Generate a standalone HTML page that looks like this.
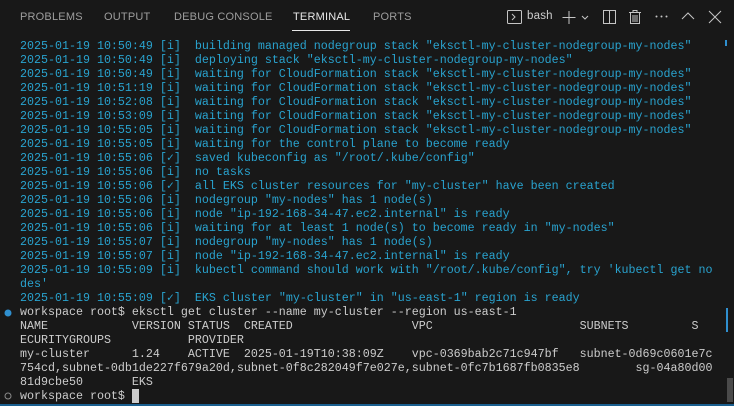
<!DOCTYPE html>
<html><head><meta charset="utf-8"><style>
html,body{margin:0;padding:0;width:734px;height:406px;overflow:hidden;background:#181818;}
body{position:relative;font-family:"Liberation Sans",sans-serif;}
.tabs{position:absolute;top:0;left:0;width:734px;height:35px;}
.tab{position:absolute;top:11px;font-size:11px;color:#9d9d9d;letter-spacing:0.2px;}
.tab.act{color:#e7e7e7;}
.ul{position:absolute;left:292px;top:30px;width:58px;height:1px;background:#e7e7e7;}
.term{position:absolute;left:20px;top:39px;font-family:"Liberation Mono",monospace;font-size:11.67px;line-height:14px;white-space:pre;color:#cccccc;}
.c{color:#29a3cf;}
.g{display:inline-block;width:7px;text-align:center;overflow:hidden;vertical-align:top;}
svg{position:absolute;}
</style></head><body>
<div class="tabs">
<span class="tab" style="left:20px">PROBLEMS</span>
<span class="tab" style="left:104px">OUTPUT</span>
<span class="tab" style="left:174px">DEBUG CONSOLE</span>
<span class="tab act" style="left:293px">TERMINAL</span>
<span class="tab" style="left:373px">PORTS</span>
<div class="ul"></div>
<svg style="left:507px;top:10px" width="16" height="15"><rect x="0.5" y="0.5" width="14" height="13" rx="1" fill="none" stroke="#c5c5c5"/><path d="M5 4l3 3-3 3" fill="none" stroke="#c5c5c5"/></svg>
<span class="tab act" style="left:527px;top:10px;font-size:11.5px;color:#cccccc">bash</span>
<svg style="left:562px;top:10px" width="30" height="15"><path d="M7 1v13M0.5 7.5h13" stroke="#c5c5c5"/><path d="M20 6l3 3 3-3" fill="none" stroke="#c5c5c5"/></svg>
<svg style="left:603px;top:10px" width="14" height="15"><rect x="0.5" y="0.5" width="12" height="13" fill="none" stroke="#c5c5c5"/><path d="M6.5 1v13" stroke="#c5c5c5"/></svg>
<svg style="left:628px;top:9px" width="14" height="16"><path d="M1 3.5h12M5 3V1.5h4V3M2.5 4v10.5h9V4M5 6v7M7 6v7M9 6v7" fill="none" stroke="#c5c5c5"/></svg>
<svg style="left:655px;top:15px" width="14" height="4"><circle cx="1.5" cy="1.5" r="1" fill="#c5c5c5"/><circle cx="6.5" cy="1.5" r="1" fill="#c5c5c5"/><circle cx="11.5" cy="1.5" r="1" fill="#c5c5c5"/></svg>
<svg style="left:681px;top:12px" width="14" height="10"><path d="M1 7l6-6 6 6" fill="none" stroke="#c5c5c5"/></svg>
<svg style="left:708px;top:10px" width="14" height="14"><path d="M1 1l12 12M13 1L1 13" stroke="#c5c5c5"/></svg>
</div>
<div class="term"><span class="c">2025-01-19 10:50:49 [i]  building managed nodegroup stack "eksctl-my-cluster-nodegroup-my-nodes"
2025-01-19 10:50:49 [i]  deploying stack "eksctl-my-cluster-nodegroup-my-nodes"
2025-01-19 10:50:49 [i]  waiting for CloudFormation stack "eksctl-my-cluster-nodegroup-my-nodes"
2025-01-19 10:51:19 [i]  waiting for CloudFormation stack "eksctl-my-cluster-nodegroup-my-nodes"
2025-01-19 10:52:08 [i]  waiting for CloudFormation stack "eksctl-my-cluster-nodegroup-my-nodes"
2025-01-19 10:53:09 [i]  waiting for CloudFormation stack "eksctl-my-cluster-nodegroup-my-nodes"
2025-01-19 10:55:05 [i]  waiting for CloudFormation stack "eksctl-my-cluster-nodegroup-my-nodes"
2025-01-19 10:55:05 [i]  waiting for the control plane to become ready
2025-01-19 10:55:06 [<span class="g">✓</span>]  saved kubeconfig as "/root/.kube/config"
2025-01-19 10:55:06 [i]  no tasks
2025-01-19 10:55:06 [<span class="g">✓</span>]  all EKS cluster resources for "my-cluster" have been created
2025-01-19 10:55:06 [i]  nodegroup "my-nodes" has 1 node(s)
2025-01-19 10:55:06 [i]  node "ip-192-168-34-47.ec2.internal" is ready
2025-01-19 10:55:06 [i]  waiting for at least 1 node(s) to become ready in "my-nodes"
2025-01-19 10:55:07 [i]  nodegroup "my-nodes" has 1 node(s)
2025-01-19 10:55:07 [i]  node "ip-192-168-34-47.ec2.internal" is ready
2025-01-19 10:55:09 [i]  kubectl command should work with "/root/.kube/config", try 'kubectl get no
des'
2025-01-19 10:55:09 [<span class="g">✓</span>]  EKS cluster "my-cluster" in "us-east-1" region is ready</span>
workspace root$ eksctl get cluster --name my-cluster --region us-east-1
NAME            VERSION STATUS  CREATED                 VPC                     SUBNETS         S
ECURITYGROUPS           PROVIDER
my-cluster      1.24    ACTIVE  2025-01-19T10:38:09Z    vpc-0369bab2c71c947bf   subnet-0d69c0601e7c
754cd,subnet-0db1de227f679a20d,subnet-0f8c282049f7e027e,subnet-0fc7b1687fb0835e8        sg-04a80d00
81d9cbe50       EKS
workspace root$ <span style="background:#cccccc">&nbsp;</span></div>
<svg style="left:4px;top:308px" width="10" height="10"><circle cx="4" cy="5" r="3.5" fill="#2f8fcf"/></svg>
<svg style="left:4px;top:391px" width="10" height="10"><circle cx="4" cy="5" r="3" fill="none" stroke="#8a8a8a"/></svg>
<div style="position:absolute;left:725px;top:40px;width:2px;height:6px;background:#2f8fcf"></div>
<div style="position:absolute;left:726px;top:308px;width:2px;height:24px;background:#2f8fcf"></div>
<div style="position:absolute;left:727px;top:378px;width:6px;height:24px;background:#4a4a4a"></div>
<div style="position:absolute;left:0;top:404px;width:734px;height:2px;background:#1a5f8f"></div>
</body></html>
